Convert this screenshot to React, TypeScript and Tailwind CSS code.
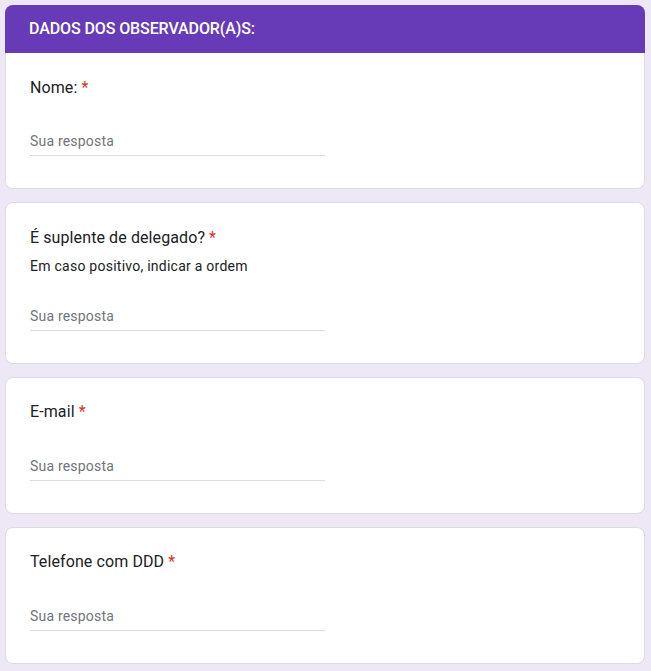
import React from "react";

const font = { fontFamily: "Roboto, Arial, sans-serif" };

function Title({ text }: { text: string }) {
  return (
    <div className="text-base leading-6 text-[#202124] tracking-[0.1px]">
      {text}
      <span className="text-[#d93025] ml-1">*</span>
    </div>
  );
}

function Input({ mt }: { mt: string }) {
  return (
    <div className={`${mt} w-1/2 border-b border-[#dadce0] pb-[4px] text-sm leading-5 tracking-[0.2px] text-[#70757a]`}>
      Sua resposta
    </div>
  );
}

function Card({ title }: { title: string }) {
  return (
    <div className="bg-white border border-[#dadce0] rounded-lg px-6 pt-[22px] pb-8">
      <Title text={title} />
      <Input mt="mt-8" />
    </div>
  );
}

export default function App() {
  return (
    <div className="min-h-[671px] bg-[#ede7f6] pt-[5px] pb-[7px]" style={font}>
      <div className="ml-[5px] w-[640px] flex flex-col gap-[13px]">
        <div className="rounded-lg overflow-hidden">
          <div className="h-12 bg-[#673ab7] flex items-center px-6 text-white text-base font-medium tracking-[-0.1px]">
            DADOS DOS OBSERVADOR(A)S:
          </div>
          <div className="bg-white border-x border-b border-[#dadce0] rounded-b-lg px-6 pt-[23px] pb-8">
            <Title text="Nome:" />
            <Input mt="mt-[31px]" />
          </div>
        </div>
        <div className="bg-white border border-[#dadce0] rounded-lg px-6 pt-[23px] pb-8">
          <Title text="É suplente de delegado?" />
          <div className="mt-[6px] text-sm leading-5 tracking-[0.25px] text-[#202124]">
            Em caso positivo, indicar a ordem
          </div>
          <Input mt="mt-[30px]" />
        </div>
        <Card title="E-mail" />
        <Card title="Telefone com DDD" />
      </div>
    </div>
  );
}
